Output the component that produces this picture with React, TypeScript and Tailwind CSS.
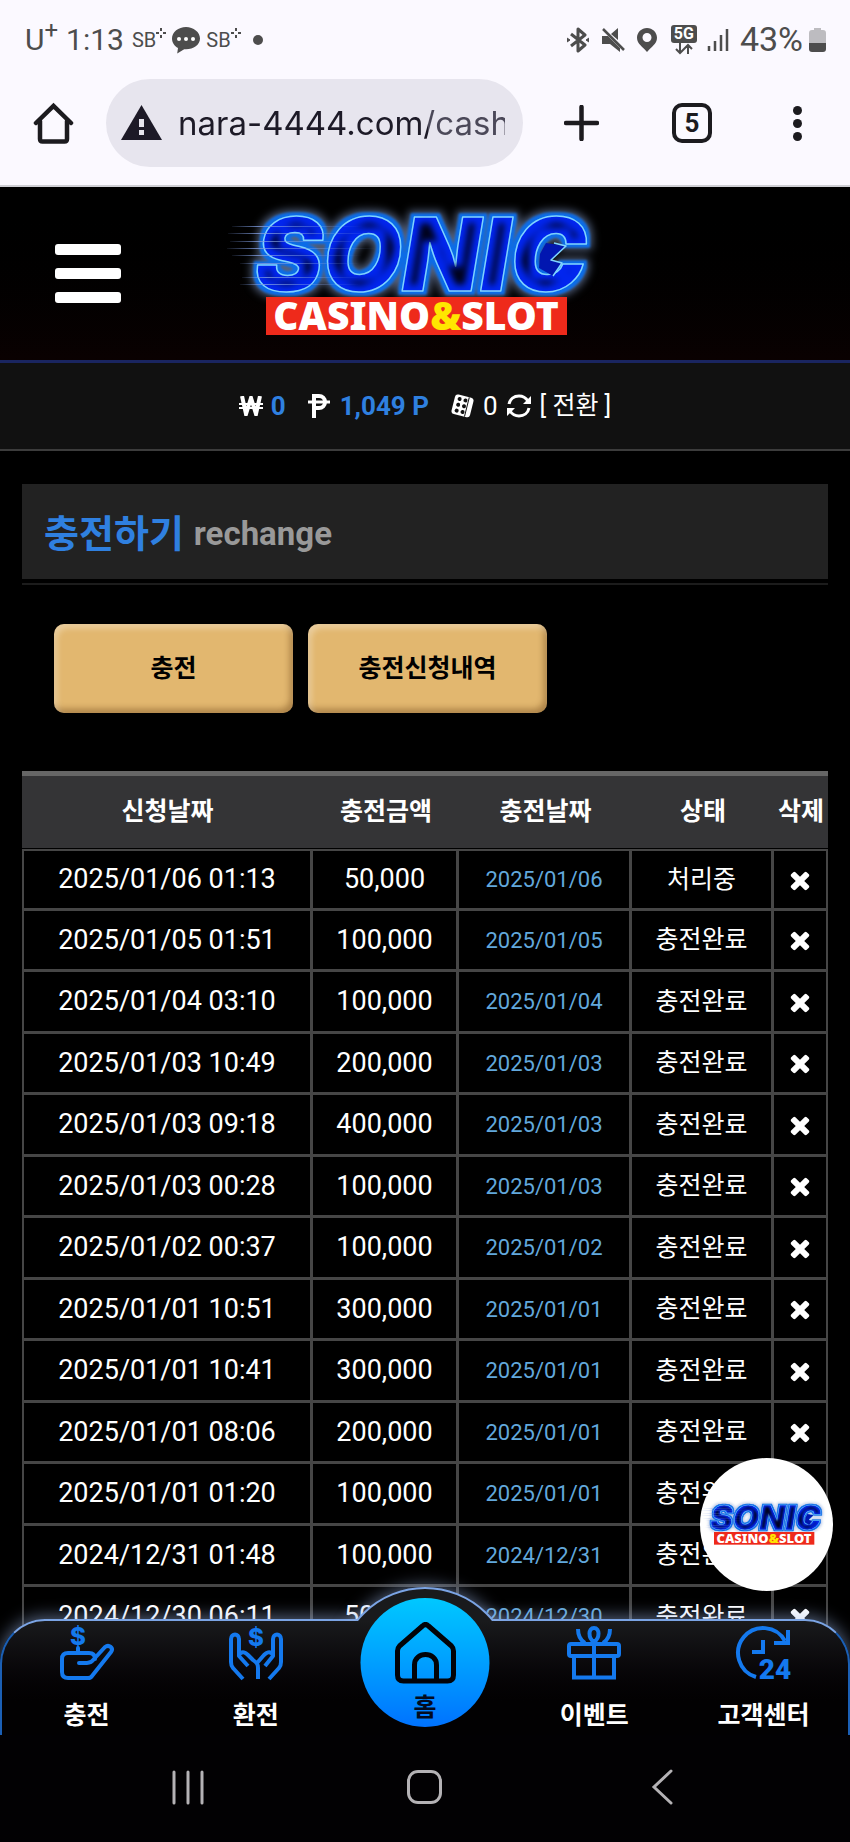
import React from 'react';

interface Deposit {
  requested: string;
  amount: string;
  date: string;
  status: string;
}

const deposits: Deposit[] = [
  { requested: '2025/01/06 01:13', amount: '50,000', date: '2025/01/06', status: '처리중' },
  { requested: '2025/01/05 01:51', amount: '100,000', date: '2025/01/05', status: '충전완료' },
  { requested: '2025/01/04 03:10', amount: '100,000', date: '2025/01/04', status: '충전완료' },
  { requested: '2025/01/03 10:49', amount: '200,000', date: '2025/01/03', status: '충전완료' },
  { requested: '2025/01/03 09:18', amount: '400,000', date: '2025/01/03', status: '충전완료' },
  { requested: '2025/01/03 00:28', amount: '100,000', date: '2025/01/03', status: '충전완료' },
  { requested: '2025/01/02 00:37', amount: '100,000', date: '2025/01/02', status: '충전완료' },
  { requested: '2025/01/01 10:51', amount: '300,000', date: '2025/01/01', status: '충전완료' },
  { requested: '2025/01/01 10:41', amount: '300,000', date: '2025/01/01', status: '충전완료' },
  { requested: '2025/01/01 08:06', amount: '200,000', date: '2025/01/01', status: '충전완료' },
  { requested: '2025/01/01 01:20', amount: '100,000', date: '2025/01/01', status: '충전완료' },
  { requested: '2024/12/31 01:48', amount: '100,000', date: '2024/12/31', status: '충전완료' },
  { requested: '2024/12/30 06:11', amount: '50,000', date: '2024/12/30', status: '충전완료' },
];

const SbBadge = () => (
  <span className="flex items-start">
    <span className="text-[20px] leading-[24px]">SB</span>
    <svg width="10" height="10" viewBox="0 0 10 10" fill="none" stroke="#4d4d4d" strokeWidth="2">
      <path d="M5 0v3M5 7v3M0 5h3M7 5h3" />
    </svg>
  </span>
);

const StatusBar = () => (
  <div className="flex h-[79px] items-center justify-between pl-[25px] pr-[24px] text-[#4d4d4d]">
    <div className="flex items-center">
      <span className="text-[30px]">U<sup className="text-[24px]">+</sup></span>
      <span className="ml-2 text-[30px]">1:13</span>
      <div className="ml-2 flex items-center gap-[6px]">
        <SbBadge />
        <svg width="28" height="28" viewBox="0 0 28 28">
          <path d="M14 1C6.500 1 0 6 0 12.500c0 4 2.400 7.500 6 9.500l-.8 5.500 7-4.300 1.800.1c7.500 0 14-4.500 14-10.800S21.500 1 14 1z" fill="#4d4d4d" />
          <circle cx="7" cy="13" r="2" fill="#fff" />
          <circle cx="14" cy="13" r="2" fill="#fff" />
          <circle cx="21" cy="13" r="2" fill="#fff" />
        </svg>
        <SbBadge />
      </div>
      <span className="ml-3 h-[10px] w-[10px] rounded-full bg-[#4d4d4d]" />
    </div>
    <div className="flex items-center">
      {/* bluetooth */}
      <svg width="22" height="26" viewBox="0 0 22 26" fill="none" stroke="#4d4d4d" strokeWidth="3" strokeLinejoin="round">
        <path d="M4 7l14 11-7 6V2l7 6L4 19" />
        <path d="M0 11l3 2-3 2M22 11l-3 2 3 2" strokeWidth="1" fill="#4d4d4d" />
      </svg>
      {/* muted */}
      <svg className="ml-3" width="24" height="24" viewBox="0 0 24 24">
        <path d="M1 8h6l12 12v4L9 16H1zM10 6l7-6v12z" fill="#4d4d4d" />
        <path d="M2 1l21 21" stroke="#4d4d4d" strokeWidth="2.500" />
      </svg>
      {/* location */}
      <svg className="ml-3" width="20" height="24" viewBox="0 0 20 24">
        <path d="M10 0C4.500 0 0 4.300 0 9.800 0 16 6 19 10 24c4-5 10-8 10-14.200C20 4.300 15.500 0 10 0zm0 14a4.500 4.500 0 1 1 0-9 4.500 4.500 0 0 1 0 9z" fill="#4d4d4d" />
      </svg>
      {/* 5G data */}
      <div className="ml-[14px] flex flex-col items-center">
        <span className="h-[18px] w-[26px] rounded-[3px] bg-[#4d4d4d] text-center text-[16px] leading-[18px] font-bold text-white">5G</span>
        <svg width="18" height="12" viewBox="0 0 18 12" fill="none" stroke="#4d4d4d" strokeWidth="2">
          <path d="M5 0v10M1 6l4 4 4-4M13 11V2M9 6l4-4 4 4" />
        </svg>
      </div>
      {/* signal */}
      <svg className="ml-[10px]" width="22" height="24" viewBox="0 0 22 24" stroke="#4d4d4d" strokeWidth="2.500">
        <path d="M2 18v5M8 13v10M14 7v16M20 1v22" />
      </svg>
      <span className="ml-[11px] text-[34px]">43%</span>
      <svg className="ml-[6px]" width="17" height="24" viewBox="0 0 17 24">
        <path d="M5 0h7v2h2a3 3 0 0 1 3 3v11H0V5a3 3 0 0 1 3-3h2z" fill="#bdbcc0" />
        <path d="M0 15h17v6a3 3 0 0 1-3 3H3a3 3 0 0 1-3-3z" fill="#4d4d4d" />
      </svg>
    </div>
  </div>
);

const BrowserBar = () => (
  <div className="flex h-[106px] items-start pl-[33px] pr-[48px]">
    <button aria-label="Home" className="flex h-[88px] items-center">
      <svg width="41" height="42" viewBox="0 0 41 42" fill="none" stroke="#1c1b1f" strokeWidth="4.500" strokeLinejoin="round" strokeLinecap="round">
        <path d="M3 21L20.500 4 38 21" strokeLinejoin="miter" />
        <path d="M7 19v18q0 2.500 2.500 2.500h22q2.500 0 2.500-2.500V19" />
      </svg>
    </button>
    <div className="ml-8 flex h-[88px] min-w-0 flex-1 items-center rounded-full bg-[#e7e5ee] pl-[15px] pr-[18px]">
      <svg className="shrink-0" width="41" height="36" viewBox="0 0 41 36">
        <path d="M20.500 0L41 35H0z" fill="#1d1a27" />
        <path d="M18 14h5v8h-5zM18 25h5v5h-5z" fill="#e7e5ee" />
      </svg>
      <input
        aria-label="Address"
        defaultValue="nara-4444.com/cash"
        className="ml-[16px] h-[50px] w-0 min-w-0 flex-1 bg-[linear-gradient(90deg,#1d1a27_250px,#4b4858_250px)] bg-clip-text font-[Inter] text-[33px] text-transparent outline-none"
      />
    </div>
    <div className="ml-[41px] flex h-[88px] items-center">
      <button aria-label="New tab">
        <svg width="35" height="36" viewBox="0 0 35 36" stroke="#1c1b1f" strokeWidth="4.500" strokeLinecap="round">
          <path d="M17.500 2v32M2 18h31" />
        </svg>
      </button>
      <button aria-label="Tabs" className="ml-[73px] h-[40px] w-[40px] rounded-[10px] border-4 border-[#1c1b1f] text-[26px] leading-[32px] font-bold text-[#1c1b1f]">
        5
      </button>
      <button aria-label="More" className="ml-[81px] flex flex-col gap-[4px]">
        <span className="h-[9px] w-[9px] rounded-full bg-[#1c1b1f]" />
        <span className="h-[9px] w-[9px] rounded-full bg-[#1c1b1f]" />
        <span className="h-[9px] w-[9px] rounded-full bg-[#1c1b1f]" />
      </button>
    </div>
  </div>
);

const Logo = ({ id, className }: { id: string; className: string }) => (
  <svg className={className} viewBox="10 0 390 145" role="img" aria-label="Sonic Casino & Slot">
    <defs>
      <linearGradient id={`${id}-line`}>
        <stop offset="0" stopColor="#7f9ce0" stopOpacity="0.1" />
        <stop offset="0.2" stopColor="#7f9ce0" stopOpacity="0.8" />
        <stop offset="1" stopColor="#7f9ce0" stopOpacity="0" />
      </linearGradient>
      {/* outer halo, solid blue rim and dark core, all from the same glyphs */}
      <filter id={`${id}-neon`} x="-10%" y="-30%" width="120%" height="160%" colorInterpolationFilters="sRGB">
        <feMorphology in="SourceAlpha" operator="dilate" radius="5" result="wide" />
        <feGaussianBlur in="wide" stdDeviation="4" result="halo" />
        <feFlood floodColor="#8aa4d4" floodOpacity="0.6" />
        <feComposite in2="halo" operator="in" result="haloColor" />
        <feMorphology in="SourceAlpha" operator="dilate" radius="3" result="rim" />
        <feGaussianBlur in="rim" stdDeviation="1" result="rimSoft" />
        <feFlood floodColor="#0b6ce8" />
        <feComposite in2="rimSoft" operator="in" result="rimColor" />
        <feMorphology in="SourceAlpha" operator="erode" radius="7" result="core" />
        <feGaussianBlur in="core" stdDeviation="3" result="coreSoft" />
        <feFlood floodColor="#00021c" />
        <feComposite in2="coreSoft" operator="in" result="coreColor" />
        <feMerge>
          <feMergeNode in="haloColor" />
          <feMergeNode in="rimColor" />
          <feMergeNode in="SourceGraphic" />
          <feMergeNode in="coreColor" />
        </feMerge>
      </filter>
    </defs>
    <text
      x="35"
      y="90"
      fontFamily="Inter, sans-serif"
      fontWeight="900"
      fontStyle="italic"
      fontSize="102"
      strokeLinejoin="round"
      fill="#0226f0"
      stroke="#7fd4ff"
      strokeWidth="1.500"
      filter={`url(#${id}-neon)`}
    >
      SONIC
    </text>
    {/* quills poking into the opening of the last letter */}
    <path d="M326 42l20 3-15 14 11 3-9 13-14-8 1-14z" fill="#0116b0" />
    <path d="M334 42l12 3-15 14 11 3-9 13" fill="none" stroke="#7fd4ff" strokeWidth="1.500" strokeLinejoin="round" />
    <g fill={`url(#${id}-line)`}>
      <rect x="12" y="25" width="130" height="1" />
      <rect x="8" y="32" width="150" height="1" />
      <rect x="10" y="40" width="140" height="1" />
      <rect x="7" y="47" width="150" height="1" />
      <rect x="12" y="54" width="130" height="1" />
      <rect x="20" y="62" width="120" height="1" />
      <rect x="22" y="76" width="120" height="1" />
      <rect x="20" y="83" width="120" height="1" />
    </g>
    <rect x="46" y="96" width="301" height="38" fill="#ee2a1b" />
    <text x="196" y="129" textAnchor="middle" fontFamily="'Noto Sans', sans-serif" fontWeight="900" fontSize="39" fill="#fff">
      CASINO<tspan fill="#ffe600">&amp;</tspan>SLOT
    </text>
  </svg>
);

const BalanceBar = () => (
  <div className="flex h-[88px] items-center justify-center border-b-2 border-[#3c3c3c] bg-[#111] text-[26px] text-white">
    <svg width="24" height="20" viewBox="0 0 24 20" fill="none" stroke="#fff">
      <path d="M3 0l4 18 5-16 5 16 4-18" strokeWidth="4" />
      <path d="M0 8h24M0 12h24" strokeWidth="2" />
    </svg>
    <span className="ml-2 font-bold text-[#2f80e0]">0</span>
    <svg className="ml-[22px]" width="22" height="24" viewBox="0 0 22 24" fill="none" stroke="#fff">
      <path d="M6 24V2h5a5 5 0 0 1 0 12H6" strokeWidth="4" />
      <path d="M0 8h22" strokeWidth="3" />
    </svg>
    <span className="ml-[10px] font-bold text-[#2f80e0]">1,049 P</span>
    <svg className="ml-[22px]" width="24" height="24" viewBox="0 0 24 24">
      <g transform="rotate(14 12 12)">
        <rect x="2" y="2" width="19" height="20" rx="3" fill="#fff" />
        <path d="M16 2v20" stroke="#111" strokeWidth="1" />
        <circle cx="7" cy="6" r="2" fill="#111" />
        <circle cx="13" cy="6" r="2" fill="#111" />
        <circle cx="7" cy="12" r="2" fill="#111" />
        <circle cx="13" cy="12" r="2" fill="#111" />
        <circle cx="7" cy="18" r="2" fill="#111" />
        <circle cx="13" cy="18" r="2" fill="#111" />
      </g>
    </svg>
    <span className="ml-2">0</span>
    <button className="ml-2 flex items-center">
      <svg width="26" height="24" viewBox="0 0 26 24" fill="none" stroke="#fff" strokeWidth="3">
        <path d="M3 10C4 5 8 2 13 2c4 0 7 2 9 5M23 14c-1 5-5 8-10 8-4 0-7-2-9-5" />
        <path d="M25 2v8h-8zM1 22v-8h8z" fill="#fff" stroke="none" />
      </svg>
      <span className="ml-2 text-[25px]">[ 전환 ]</span>
    </button>
  </div>
);

const CloseIcon = () => (
  <svg className="mx-auto" width="28" height="28" viewBox="0 0 1792 1792" fill="#fff">
    <path d="M1490 1322q0 40-28 68l-136 136q-28 28-68 28t-68-28l-294-294-294 294q-28 28-68 28t-68-28l-136-136q-28-28-28-68t28-68l294-294-294-294q-28-28-28-68t28-68l136-136q28-28 68-28t68 28l294 294 294-294q28-28 68-28t68 28l136 136q28 28 28 68t-28 68l-294 294 294 294q28 28 28 68z" />
  </svg>
);

const DepositTable = () => (
  <table className="mt-[58px] w-full table-fixed border-separate border-spacing-0 text-center text-[25px] text-white">
    <colgroup>
      <col className="w-[291px]" />
      <col className="w-[146px]" />
      <col className="w-[173px]" />
      <col className="w-[142px]" />
      <col className="w-[54px]" />
    </colgroup>
    <thead>
      <tr className="h-[78px] bg-[#343436]">
        {['신청날짜', '충전금액', '충전날짜', '상태', '삭제'].map(h => (
          <th key={h} className="border-t-[5px] border-b border-t-[#666] border-b-black p-0 font-bold whitespace-nowrap">{h}</th>
        ))}
      </tr>
    </thead>
    <tbody className="[&_td]:border-r-[3px] [&_td]:border-b-[3px] [&_td]:border-[#464646] [&_td]:p-0 [&_td:first-child]:border-l-2 [&_td:last-child]:border-r-2 [&_tr:first-child_td]:border-t-2">
      {deposits.map(d => (
        <tr key={d.requested} className="odd:h-[62px] even:h-[61px]">
          <td className="text-[27px]">{d.requested}</td>
          <td className="text-[27px]">{d.amount}</td>
          <td className="text-[22px] text-[#62a8dc]">{d.date}</td>
          <td>{d.status}</td>
          <td>
            <button aria-label="삭제" className="block w-full">
              <CloseIcon />
            </button>
          </td>
        </tr>
      ))}
    </tbody>
  </table>
);

const DepositIcon = () => (
  <svg className="overflow-visible" width="54" height="54" viewBox="0 0 54 54" fill="none" stroke="#1479ee" strokeWidth="4" strokeLinecap="round" strokeLinejoin="round">
    <text x="18" y="19" textAnchor="middle" fontSize="24" fontWeight="800" fontFamily="Inter, sans-serif" fill="#1479ee" stroke="none">$</text>
    <path d="M18 22v4" />
    <path d="M35 33c0-4-2-6-6-6H8c-4 0-6 2-6 6v13c0 4 2 6 6 6h20c2 0 3 0 4-2l19-24c3-4-2-8-6-5L34 33c-2 3-4 4-7 4h-8" />
  </svg>
);

const WithdrawIcon = () => (
  <svg className="overflow-visible" width="54" height="54" viewBox="0 0 54 54" fill="none" stroke="#1479ee" strokeWidth="4" strokeLinejoin="round">
    <text x="27" y="20" textAnchor="middle" fontSize="24" fontWeight="800" fontFamily="Inter, sans-serif" fill="#1479ee" stroke="none">$</text>
    <path d="M14 53L4 42c-2-2-2-3-2-6V13c0-6 8-6 8 0v17l9 10" />
    <path d="M40 53l10-11c2-2 2-3 2-6V13c0-6-8-6-8 0v17l-8 10" />
    <path d="M10 29c3-5 7-2 9 0l5 5c4 3 5 4 5 8v11M44 29c-3-5-7-2-9 0l-7 8" />
  </svg>
);

const GiftIcon = () => (
  <svg width="54" height="54" viewBox="0 0 54 54" fill="none" stroke="#1479ee" strokeWidth="4">
    <rect x="2" y="18" width="50" height="12" rx="2" />
    <path d="M7 30v21.500h40V30M27 16v36" />
    <path d="M27 16c-6-4-6-14 0-14s6 10 0 14zM11 3c0 7 2 11 7 14M43 3c0 7-2 11-7 14" />
  </svg>
);

const SupportIcon = () => (
  <svg className="overflow-visible" width="54" height="54" viewBox="0 0 54 54" fill="none" stroke="#1479ee" strokeWidth="4">
    <path d="M20 51A25 25 0 1 1 49 15" />
    <path d="M52 4v13H38M27 14v12H16" />
    <text x="39" y="53" textAnchor="middle" fontSize="28" fontWeight="900" fontFamily="Roboto, sans-serif" fill="#1479ee" stroke="none">24</text>
  </svg>
);

const navItemClass = 'flex flex-col items-center pt-[5px] text-[25px] leading-[32px] font-bold text-white';

const BottomNav = () => (
  <nav className="absolute inset-x-0 bottom-0">
    <div className="grid h-[116px] grid-cols-5 rounded-t-[45px] border-x-2 border-t-2 border-x-[#1b5fb4] border-t-[#7ba4e4] bg-linear-to-b from-[#191a1c] to-[#020102] to-70% shadow-[0_-3px_16px_rgba(160,185,235,0.5)]">
      <a href="#deposit" className={navItemClass}>
        <DepositIcon />
        <span className="mt-[20px]">충전</span>
      </a>
      <a href="#withdraw" className={navItemClass}>
        <WithdrawIcon />
        <span className="mt-[20px]">환전</span>
      </a>
      <span />
      <a href="#event" className={navItemClass}>
        <GiftIcon />
        <span className="mt-[20px]">이벤트</span>
      </a>
      <a href="#support" className={navItemClass}>
        <SupportIcon />
        <span className="mt-[20px]">고객센터</span>
      </a>
    </div>
    {/* raised hump behind the home button */}
    <div className="absolute bottom-[114px] left-1/2 h-[54px] w-[220px] -translate-x-1/2 overflow-hidden">
      <div className="mx-auto mt-[20px] h-[176px] w-[176px] rounded-full border-2 border-[#7ba4e4] bg-[#191a1c] shadow-[0_-2px_16px_rgba(160,185,235,0.5)]" />
    </div>
    <a href="#home" className="absolute bottom-[8px] left-1/2 flex h-[129px] w-[129px] -translate-x-1/2 flex-col items-center rounded-full bg-linear-to-b from-[#00c8ff] to-[#0072ff] pt-[24px] text-[25px] leading-[32px] font-bold text-[#020b20]">
      <svg width="62" height="62" viewBox="0 0 62 62" fill="none" stroke="#020308" strokeWidth="5" strokeLinejoin="round">
        <path d="M3 53V29c0-2 0-3 2-5L28 4c2-2 4-2 6 0l23 20c2 2 2 3 2 5v24c0 4-2 6-6 6H9c-4 0-6-2-6-6z" />
        <path d="M20 59V43c0-14 22-14 22 0v16" />
      </svg>
      <span className="mt-2">홈</span>
    </a>
  </nav>
);

const SystemNav = () => (
  <div className="grid h-[107px] shrink-0 grid-cols-3 bg-[#020103] px-[70px] pb-[3px]">
    <button aria-label="Recent apps" className="flex items-center justify-center">
      <svg width="34" height="36" viewBox="0 0 34 36" stroke="#b4b2b5" strokeWidth="3" strokeLinecap="round">
        <path d="M3 3v31M17 3v31M31 3v31" />
      </svg>
    </button>
    <button aria-label="Home" className="flex items-center justify-center">
      <span className="h-[34px] w-[35px] rounded-[11px] border-3 border-[#b4b2b5]" />
    </button>
    <button aria-label="Back" className="flex items-center justify-center">
      <svg width="22" height="36" viewBox="0 0 22 36" fill="none" stroke="#b4b2b5" strokeWidth="3" strokeLinecap="round">
        <path d="M20 2L3 18l17 16" />
      </svg>
    </button>
  </div>
);

const actionClass =
  'h-[89px] w-[239px] rounded-[10px] bg-[#e2b76f] text-[25px] font-bold text-black shadow-[inset_3px_4px_6px_rgba(255,255,255,0.35),inset_-3px_-4px_6px_rgba(90,50,10,0.4)]';

export default function App() {
  return (
    <div className="flex h-screen flex-col overflow-hidden bg-black font-[Roboto,'Noto_Sans_CJK_KR',sans-serif]">
      <div className="shrink-0 border-b-2 border-[#cfcfd4] bg-[#fbf9ff]">
        <StatusBar />
        <BrowserBar />
      </div>

      <div className="relative min-h-0 flex-1 overflow-hidden">
        <header className="grid h-[176px] grid-cols-[1fr_auto_1fr] items-center border-b-3 border-[#1a2560] bg-linear-to-b from-black to-[#0a0101]">
          <button aria-label="Menu" className="ml-[55px] flex w-[66px] flex-col gap-[13px]">
            <span className="h-[11px] rounded-[3px] bg-white" />
            <span className="h-[11px] rounded-[3px] bg-white" />
            <span className="h-[11px] rounded-[3px] bg-white" />
          </button>
          <Logo id="top" className="h-[145px] w-[390px] overflow-visible" />
        </header>
        <BalanceBar />

        <main className="px-[22px] pt-[33px]">
          <div className="border-b-2 border-[#1c1c1c] pb-[4px]">
            <h1 className="flex h-[95px] items-center bg-[#222] px-[22px] pt-[5px] text-[38px] font-bold text-[#2f80e0]">
              충전하기
              <small className="ml-[10px] text-[33px] text-[#999]">rechange</small>
            </h1>
          </div>
          <div className="mt-[39px] flex gap-[15px] pl-[32px]">
            <button className={actionClass}>충전</button>
            <button className={actionClass}>충전신청내역</button>
          </div>
          <DepositTable />
        </main>

        <a href="#logo" aria-label="Sonic" className="absolute right-[17px] bottom-[144px] flex h-[133px] w-[133px] items-center justify-center rounded-full bg-white">
          <Logo id="badge" className="w-[130px] overflow-visible" />
        </a>
        <BottomNav />
      </div>

      <SystemNav />
    </div>
  );
}
